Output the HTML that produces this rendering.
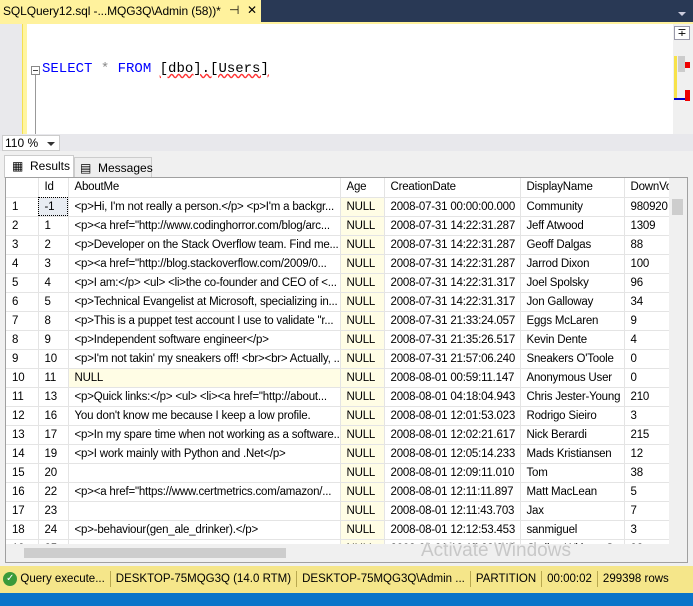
<!DOCTYPE html>
<html><head><meta charset="utf-8"><style>
*{margin:0;padding:0;box-sizing:border-box}
body{width:693px;height:606px;overflow:hidden;background:#293955;font-family:"Liberation Sans",sans-serif;font-size:12px;position:relative}
.abs{position:absolute}
#tab{left:0;top:0;width:261px;height:22px;background:#fff29d;color:#000;font-size:12px;line-height:22px;padding-left:3px;white-space:nowrap;overflow:hidden;letter-spacing:-0.1px}
#yl{left:0;top:22px;width:693px;height:2px;background:#fff29d}
#ed{left:0;top:24px;width:693px;height:110px;background:#fff}
#gut{left:0;top:24px;width:22px;height:110px;background:#e9e9ec}
#ybar{left:22px;top:24px;width:5px;height:110px;background:#fff5a0;border-left:1px solid #f5e050}
#sql{left:42px;top:61px;font-family:"Liberation Mono",monospace;font-size:14px;color:#00f;white-space:pre}
#zoom{left:0;top:134px;width:693px;height:17px;background:#e8e8ec}
#mid{left:0;top:151px;width:693px;height:415px;background:#f0f0f0}
#grid{left:5px;top:177px;width:683px;height:386px;background:#fff;border:1px solid #a0a0a0;overflow:hidden}
table{border-collapse:collapse;table-layout:fixed;position:absolute;left:0;top:0;width:663px}
td{height:19px;border-right:1px solid #e4e4e4;border-bottom:1px solid #e4e4e4;white-space:nowrap;overflow:hidden;padding-left:6px;font-size:11.5px;letter-spacing:-0.2px;color:#000}
td.n{background:#fffde5}
#status{left:0;top:566px;width:693px;height:27px;background:#f5e68a;font-size:11.5px;line-height:27px;white-space:nowrap;overflow:hidden}
#blue{left:0;top:593px;width:693px;height:13px;background:#0a74c9}
.sep{display:inline-block;width:1px;height:16px;background:#b8a850;vertical-align:middle;margin:0 5px}
.tb{white-space:nowrap;font-size:12px}
</style></head><body>
<div id="tab" class="abs">SQLQuery12.sql -...MQG3Q\Admin (58))*</div>
<div class="abs" style="left:229px;top:3px;font-size:12px">⊣</div>
<div class="abs" style="left:247px;top:3px;font-size:12px">✕</div>
<div class="abs" style="left:678px;top:12px;width:0;height:0;border-left:4px solid transparent;border-right:4px solid transparent;border-top:4px solid #ccd"></div>
<div id="yl" class="abs"></div>
<div id="ed" class="abs"></div>
<div id="gut" class="abs"></div>
<div id="ybar" class="abs"></div>
<div class="abs" style="left:31px;top:66px;width:9px;height:9px;border:1px solid #888;background:#fff"></div>
<div class="abs" style="left:33px;top:70px;width:5px;height:1px;background:#444"></div>
<div class="abs" style="left:35px;top:75px;width:1px;height:59px;background:#999"></div>
<div id="sql" class="abs">SELECT <span style="color:#888">*</span> FROM <span style="color:#000;text-decoration:underline wavy #f33">[dbo].[Users]</span></div>
<div class="abs" style="left:673px;top:24px;width:20px;height:110px;background:#f0f0f0"></div>
<div class="abs" style="left:674px;top:26px;width:16px;height:14px;border:1px solid #99a;background:#fff;font-size:11px;line-height:12px;text-align:center">∓</div>
<div class="abs" style="left:674px;top:56px;width:3px;height:43px;background:#f7e24a"></div>
<div class="abs" style="left:678px;top:56px;width:7px;height:16px;background:#ccc"></div>
<div class="abs" style="left:685px;top:62px;width:5px;height:6px;background:#e00"></div>
<div class="abs" style="left:685px;top:90px;width:5px;height:11px;background:#e00"></div>
<div class="abs" style="left:674px;top:98px;width:11px;height:2px;background:#00c"></div>
<div id="zoom" class="abs"></div>
<div class="abs" style="left:2px;top:135px;width:58px;height:16px;background:#fff;border:1px solid #ccc;font-size:12px;line-height:14px;padding-left:2px">110 %<span style="position:absolute;right:4px;top:6px;border-left:4px solid transparent;border-right:4px solid transparent;border-top:4px solid #333"></span></div>
<div id="mid" class="abs"></div>
<div class="abs tb" style="left:4px;top:155px;width:70px;height:23px;background:#fff;border:1px solid #ccc;border-bottom:none;line-height:21px;padding-left:7px">▦&nbsp; Results</div>
<div class="abs tb" style="left:74px;top:157px;width:78px;height:20px;background:#eee;border:1px solid #ccc;border-bottom:none;line-height:20px;padding-left:5px">▤&nbsp; Messages</div>
<div id="grid" class="abs">
<table>
<colgroup><col style="width:32px"><col style="width:30px"><col style="width:272px"><col style="width:44px"><col style="width:136px"><col style="width:104px"><col style="width:45px"></colgroup>
<tr><td></td><td>Id</td><td>AboutMe</td><td>Age</td><td>CreationDate</td><td>DisplayName</td><td>DownVo</td></tr>
<tr><td>1</td><td style="background:#e8ecf2;outline:1px dotted #000;outline-offset:-1px">-1</td><td>&lt;p&gt;Hi, I'm not really a person.&lt;/p&gt;  &lt;p&gt;I'm a backgr...</td><td class="n">NULL</td><td>2008-07-31 00:00:00.000</td><td>Community</td><td>980920</td></tr>
<tr><td>2</td><td>1</td><td>&lt;p&gt;&lt;a href="http://www.codinghorror.com/blog/arc...</td><td class="n">NULL</td><td>2008-07-31 14:22:31.287</td><td>Jeff Atwood</td><td>1309</td></tr>
<tr><td>3</td><td>2</td><td>&lt;p&gt;Developer on the Stack Overflow team.  Find me...</td><td class="n">NULL</td><td>2008-07-31 14:22:31.287</td><td>Geoff Dalgas</td><td>88</td></tr>
<tr><td>4</td><td>3</td><td>&lt;p&gt;&lt;a href="http://blog.stackoverflow.com/2009/0...</td><td class="n">NULL</td><td>2008-07-31 14:22:31.287</td><td>Jarrod Dixon</td><td>100</td></tr>
<tr><td>5</td><td>4</td><td>&lt;p&gt;I am:&lt;/p&gt;  &lt;ul&gt; &lt;li&gt;the co-founder and CEO of &lt;...</td><td class="n">NULL</td><td>2008-07-31 14:22:31.317</td><td>Joel Spolsky</td><td>96</td></tr>
<tr><td>6</td><td>5</td><td>&lt;p&gt;Technical Evangelist at Microsoft, specializing in...</td><td class="n">NULL</td><td>2008-07-31 14:22:31.317</td><td>Jon Galloway</td><td>34</td></tr>
<tr><td>7</td><td>8</td><td>&lt;p&gt;This is a puppet test account I use to validate "r...</td><td class="n">NULL</td><td>2008-07-31 21:33:24.057</td><td>Eggs McLaren</td><td>9</td></tr>
<tr><td>8</td><td>9</td><td>&lt;p&gt;Independent software engineer&lt;/p&gt;</td><td class="n">NULL</td><td>2008-07-31 21:35:26.517</td><td>Kevin Dente</td><td>4</td></tr>
<tr><td>9</td><td>10</td><td>&lt;p&gt;I'm not takin' my sneakers off! &lt;br&gt;&lt;br&gt; Actually, ...</td><td class="n">NULL</td><td>2008-07-31 21:57:06.240</td><td>Sneakers O'Toole</td><td>0</td></tr>
<tr><td>10</td><td>11</td><td class="n">NULL</td><td class="n">NULL</td><td>2008-08-01 00:59:11.147</td><td>Anonymous User</td><td>0</td></tr>
<tr><td>11</td><td>13</td><td>&lt;p&gt;Quick links:&lt;/p&gt;  &lt;ul&gt; &lt;li&gt;&lt;a href="http://about...</td><td class="n">NULL</td><td>2008-08-01 04:18:04.943</td><td>Chris Jester-Young</td><td>210</td></tr>
<tr><td>12</td><td>16</td><td>You don't know me because I keep a low profile.</td><td class="n">NULL</td><td>2008-08-01 12:01:53.023</td><td>Rodrigo Sieiro</td><td>3</td></tr>
<tr><td>13</td><td>17</td><td>&lt;p&gt;In my spare time when not working as a software...</td><td class="n">NULL</td><td>2008-08-01 12:02:21.617</td><td>Nick Berardi</td><td>215</td></tr>
<tr><td>14</td><td>19</td><td>&lt;p&gt;I work mainly with Python and .Net&lt;/p&gt;</td><td class="n">NULL</td><td>2008-08-01 12:05:14.233</td><td>Mads Kristiansen</td><td>12</td></tr>
<tr><td>15</td><td>20</td><td></td><td class="n">NULL</td><td>2008-08-01 12:09:11.010</td><td>Tom</td><td>38</td></tr>
<tr><td>16</td><td>22</td><td>&lt;p&gt;&lt;a href="https://www.certmetrics.com/amazon/...</td><td class="n">NULL</td><td>2008-08-01 12:11:11.897</td><td>Matt MacLean</td><td>5</td></tr>
<tr><td>17</td><td>23</td><td></td><td class="n">NULL</td><td>2008-08-01 12:11:43.703</td><td>Jax</td><td>7</td></tr>
<tr><td>18</td><td>24</td><td>&lt;p&gt;-behaviour(gen_ale_drinker).&lt;/p&gt;</td><td class="n">NULL</td><td>2008-08-01 12:12:53.453</td><td>sanmiguel</td><td>3</td></tr>
<tr><td>19</td><td>25</td><td>&lt;p&gt;...</td><td class="n">NULL</td><td>2008-08-01 12:15:23.243</td><td>Coding Without C</td><td>92</td></tr>
</table>
<div class="abs" style="left:663px;top:0;width:18px;height:366px;background:#f0f0f0"></div>
<div class="abs" style="left:666px;top:21px;width:11px;height:16px;background:#cdcdcd"></div>
<div class="abs" style="left:0;top:366px;width:681px;height:18px;background:#f0f0f0"></div>
<div class="abs" style="left:18px;top:370px;width:262px;height:10px;background:#cdcdcd"></div>
<div class="abs" style="left:415px;top:362px;color:#c8c8c8;font-size:19px">Activate Windows</div>
</div>
<div id="status" class="abs">&nbsp;<span style="display:inline-block;width:14px;height:14px;border-radius:7px;background:#3a9a3a;color:#fff;font-size:10px;line-height:14px;text-align:center;vertical-align:middle">✓</span> Query  execute...<span class="sep"></span>DESKTOP-75MQG3Q (14.0 RTM)<span class="sep"></span>DESKTOP-75MQG3Q\Admin ...<span class="sep"></span>PARTITION<span class="sep"></span>00:00:02<span class="sep"></span>299398 rows</div>
<div id="blue" class="abs"></div>
</body></html>
